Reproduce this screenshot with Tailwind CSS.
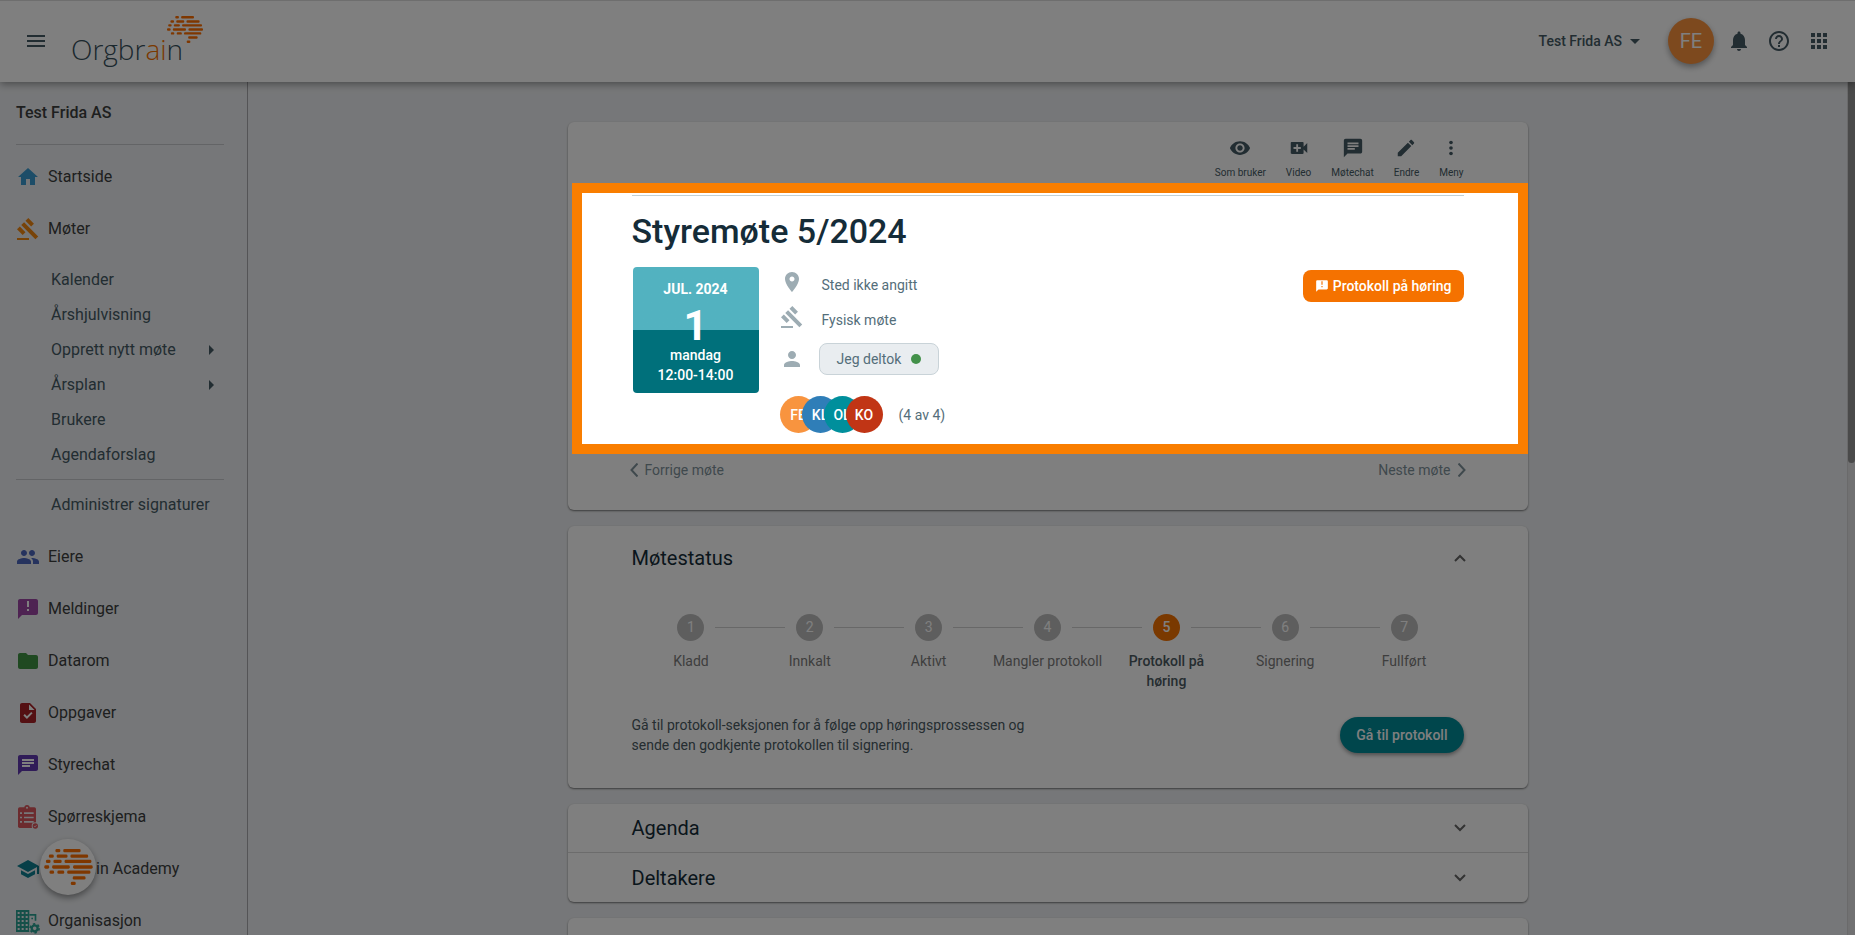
<!DOCTYPE html>
<html lang="nb">
<head>
<meta charset="utf-8">
<title>Orgbrain – Styremøte 5/2024</title>
<script src="https://cdn.jsdelivr.net/npm/@tailwindcss/browser@4"></script>
</head>
<body class="font-['Roboto',sans-serif]">
<svg class="hidden" aria-hidden="true">
  <symbol id="brain" viewBox="130 746 148 110">
    <g fill="#ff6f00">
      <rect x="164" y="746" width="15" height="10" rx="4"/><rect x="188" y="746" width="53" height="10" rx="4"/>
      <rect x="144" y="763" width="15" height="10" rx="4"/><rect x="168" y="763" width="33" height="10" rx="4"/><rect x="210" y="763" width="54" height="10" rx="4"/>
      <rect x="135" y="779" width="14" height="10" rx="4"/><rect x="158" y="779" width="25" height="10" rx="4"/><rect x="192" y="779" width="82" height="10" rx="4"/>
      <rect x="130" y="796" width="15" height="10" rx="4"/><rect x="154" y="796" width="54" height="10" rx="4"/><rect x="218" y="796" width="60" height="10" rx="4"/>
      <rect x="146" y="812" width="14" height="10" rx="4"/><rect x="170" y="812" width="21" height="10" rx="4"/><rect x="200" y="812" width="71" height="10" rx="4"/>
      <rect x="217" y="829" width="39" height="10" rx="4"/>
      <rect x="211" y="846" width="15" height="10" rx="4"/>
    </g>
  </symbol>
  <symbol id="gavel" viewBox="0 0 24 24"><path d="M1 21h12v2H1zM5.245 8.07l2.83-2.827 14.14 14.142-2.828 2.828zM12.317 1l5.657 5.656-2.83 2.83-5.654-5.66zM3.825 9.485l5.657 5.657-2.828 2.828-5.657-5.657z"/></symbol>
  <symbol id="chat" viewBox="0 0 24 24"><path d="M20 2H4c-1.1 0-1.99.9-1.99 2L2 22l4-4h14c1.1 0 2-.9 2-2V4c0-1.1-.9-2-2-2zM6 9h12v2H6V9zm8 5H6v-2h8v2zm4-6H6V6h12v2z"/></symbol>
  <symbol id="notice" viewBox="0 0 24 24"><path d="M20 2H4c-1.1 0-1.99.9-1.99 2L2 22l4-4h14c1.1 0 2-.9 2-2V4c0-1.1-.9-2-2-2zm-7 12h-2v-2h2v2zm0-4h-2V4h2v6z"/></symbol>
  <symbol id="down" viewBox="0 0 12 8"><path d="M1 1l5 5 5-5" fill="none" stroke="currentColor" stroke-width="2"/></symbol>
</svg>

<div class="flex h-screen flex-col overflow-hidden bg-[#edeff2]">
  <header class="relative z-10 flex h-[82px] shrink-0 items-center border-t border-[#dddddd] bg-white px-6 pb-px text-[#455a64] shadow-[0_2px_8px_rgba(0,0,0,0.4)]">
    <button class="flex size-6 items-center justify-center" aria-label="Meny">
      <svg class="h-3 w-[18px]" viewBox="0 0 18 12" fill="currentColor"><path d="M0 0h18v2H0zM0 5h18v2H0zM0 10h18v2H0z"/></svg>
    </button>
    <a href="#" class="relative ml-[23px] block pt-4 font-['Open_Sans'] text-[28px] font-light leading-8 text-[#37505c]" aria-label="Orgbrain">Orgbr<span class="text-[#f57200]">ai</span>n<svg class="absolute -right-5 -top-px h-[27px] w-9"><use href="#brain"/></svg></a>
    <button class="ml-auto flex items-center gap-2 text-sm font-medium">Test Frida AS
      <svg class="h-[5px] w-[10px]" viewBox="0 0 10 5" fill="currentColor"><path d="M0 0h10L5 5z"/></svg>
    </button>
    <button class="ml-7 size-[46px] rounded-full bg-[#fb923c] text-xl text-white shadow-[0_3px_6px_rgba(0,0,0,0.35)]">FE</button>
    <div class="ml-[13px] flex gap-4">
      <button aria-label="Varsler"><svg class="size-6" viewBox="0 0 24 24" fill="currentColor"><path d="M12 22c1.1 0 2-.9 2-2h-4c0 1.1.89 2 2 2zm6-6v-5c0-3.07-1.64-5.64-4.5-6.32V4c0-.83-.67-1.5-1.5-1.5s-1.5.67-1.5 1.5v.68C7.63 5.36 6 7.92 6 11v5l-2 2v1h16v-1l-2-2z"/></svg></button>
      <button aria-label="Hjelp"><svg class="size-6" viewBox="0 0 24 24" fill="currentColor"><path d="M11 18h2v-2h-2v2zm1-16C6.48 2 2 6.48 2 12s4.48 10 10 10 10-4.48 10-10S17.52 2 12 2zm0 18c-4.41 0-8-3.59-8-8s3.59-8 8-8 8 3.59 8 8-3.59 8-8 8zm0-14c-2.21 0-4 1.79-4 4h2c0-1.1.9-2 2-2s2 .9 2 2c0 2-3 1.75-3 5h2c0-2.25 3-2.5 3-5 0-2.21-1.79-4-4-4z"/></svg></button>
      <button aria-label="Apper"><svg class="size-6" viewBox="0 0 24 24" fill="currentColor"><path d="M4 8h4V4H4v4zm6 12h4v-4h-4v4zm-6 0h4v-4H4v4zm0-6h4v-4H4v4zm6 0h4v-4h-4v4zm6-10v4h4V4h-4zm-6 4h4V4h-4v4zm6 6h4v-4h-4v4zm0 6h4v-4h-4v4z"/></svg></button>
    </div>
  </header>

  <div class="flex min-h-0 flex-1">
    <nav class="w-[248px] shrink-0 border-r border-[#a8a8ac] text-[#3c3e3e]">
      <div class="mb-1.5 ml-4 flex h-[63px] w-[208px] items-center border-b border-[#c6c9cc] text-base font-medium">Test Frida AS</div>
      <ul>
        <li><a href="#" class="flex h-[52px] items-center gap-2 px-4"><svg class="size-6" viewBox="0 0 24 24" fill="#3b9bd1"><path d="M10 20v-6h4v6h5v-8h3L12 3 2 12h3v8z"/></svg>Startside</a></li>
        <li><a href="#" class="flex h-[52px] items-center gap-2 px-4"><svg class="size-6" fill="#f18711"><use href="#gavel"/></svg>Møter</a>
          <ul class="pb-[9px] pt-[7px] text-[#455a64]">
            <li><a href="#" class="flex h-[35px] items-center pl-[51px]">Kalender</a></li>
            <li><a href="#" class="flex h-[35px] items-center pl-[51px]">Årshjulvisning</a></li>
            <li><a href="#" class="flex h-[35px] items-center justify-between pl-[51px] pr-[33px]">Opprett nytt møte<svg class="h-[10px] w-[5px]" viewBox="0 0 5 10" fill="currentColor"><path d="M0 0l5 5-5 5z"/></svg></a></li>
            <li><a href="#" class="flex h-[35px] items-center justify-between pl-[51px] pr-[33px]">Årsplan<svg class="h-[10px] w-[5px]" viewBox="0 0 5 10" fill="currentColor"><path d="M0 0l5 5-5 5z"/></svg></a></li>
            <li><a href="#" class="flex h-[35px] items-center pl-[51px]">Brukere</a></li>
            <li><a href="#" class="flex h-[35px] items-center pl-[51px]">Agendaforslag</a></li>
            <li class="mx-4 my-[7px] h-px w-[208px] bg-[#c6c9cc]"></li>
            <li><a href="#" class="flex h-[35px] items-center pl-[51px]">Administrer signaturer</a></li>
          </ul>
        </li>
        <li><a href="#" class="flex h-[52px] items-center gap-2 px-4"><svg class="size-6" viewBox="0 0 24 24" fill="#4c67bd"><path d="M16 11c1.66 0 2.99-1.34 2.99-3S17.66 5 16 5c-1.66 0-3 1.34-3 3s1.34 3 3 3zm-8 0c1.66 0 2.99-1.34 2.99-3S9.66 5 8 5C6.34 5 5 6.34 5 8s1.34 3 3 3zm0 2c-2.33 0-7 1.17-7 3.5V19h14v-2.5c0-2.33-4.67-3.5-7-3.5zm8 0c-.29 0-.62.02-.97.05 1.16.84 1.97 1.97 1.97 3.45V19h6v-2.5c0-2.33-4.67-3.5-7-3.5z"/></svg>Eiere</a></li>
        <li><a href="#" class="flex h-[52px] items-center gap-2 px-4"><svg class="size-6" fill="#9c46a5"><rect x="9" y="4" width="6" height="11" fill="#fff"/><use href="#notice"/></svg>Meldinger</a></li>
        <li><a href="#" class="flex h-[52px] items-center gap-2 px-4"><svg class="size-6" viewBox="0 0 24 24" fill="#3f9243"><path d="M10 4H4c-1.1 0-1.99.9-1.99 2L2 18c0 1.1.9 2 2 2h16c1.1 0 2-.9 2-2V8c0-1.1-.9-2-2-2h-8l-2-2z"/></svg>Datarom</a></li>
        <li><a href="#" class="flex h-[52px] items-center gap-2 px-4"><svg class="size-6" viewBox="0 0 24 24" fill="#a82126"><path fill="#fff" d="M7 10h11v8H7zM13 3l6 6h-6z"/><path d="M14 2H6c-1.1 0-1.99.9-1.99 2L4 20c0 1.1.89 2 1.99 2H18c1.1 0 2-.9 2-2V8l-6-6zm-3.06 16L7.4 14.46l1.41-1.41 2.12 2.12 4.24-4.24 1.41 1.41L10.94 18zM13 9V3.5L18.5 9H13z"/></svg>Oppgaver</a></li>
        <li><a href="#" class="flex h-[52px] items-center gap-2 px-4"><svg class="size-6" fill="#6039b1"><rect x="5" y="5" width="14" height="10" fill="#fff"/><use href="#chat"/></svg>Styrechat</a></li>
        <li><a href="#" class="flex h-[52px] items-center gap-2 px-4"><svg class="size-6" viewBox="48 615 72 72" fill="#d9575c"><rect x="54" y="622" width="54" height="62" rx="5"/><circle cx="81" cy="623" r="8"/><circle cx="81" cy="623" r="3" fill="#edeff2"/><path d="M60 637h6v5h-6zM60 650h6v5h-6zM60 663h6v5h-6zM72 637h29v5H72zM72 650h29v5H72zM72 663h29v5H72z" fill="#edeff2"/><circle cx="106" cy="678" r="11" fill="#edeff2"/><circle cx="106" cy="678" r="8"/><path d="M102 678l3 3 5-6" fill="none" stroke="#edeff2" stroke-width="2"/></svg>Spørreskjema</a></li>
        <li><a href="#" class="flex h-[52px] items-center gap-2 px-4"><svg class="size-6" viewBox="0 0 24 24" fill="#0f7f91"><path d="M5 13.18v4L12 21l7-3.82v-4L12 17l-7-3.82zM12 3L1 9l11 6 9-4.91V17h2V9L12 3z"/></svg>Orgbrain Academy</a></li>
        <li><a href="#" class="flex h-[52px] items-center gap-2 px-4"><svg class="size-6 overflow-visible" viewBox="48 924 72 72" fill="#2ba193"><path d="M48 927h40v66H48z"/><path d="M53 933h6v6h-6zM65 933h6v6h-6zM77 933h6v6h-6zM53 945h6v6h-6zM65 945h6v6h-6zM77 945h6v6h-6zM53 957h6v6h-6zM65 957h6v6h-6zM77 957h6v6h-6zM53 969h6v6h-6zM65 969h6v6h-6zM77 969h6v6h-6zM53 981h6v6h-6zM65 981h6v6h-6zM77 981h6v6h-6z" fill="#edeff2"/><path d="M88 939h21v20h-5v-15H88zM94 950h5v5h-5z"/><circle cx="104" cy="982" r="17" fill="#edeff2"/><circle cx="104" cy="982" r="9" fill="none" stroke="#2ba193" stroke-width="7"/><circle cx="104" cy="982" r="13.5" fill="none" stroke="#2ba193" stroke-width="5" stroke-dasharray="7 7.14"/></svg>Organisasjon</a></li>
      </ul>
    </nav>

    <main class="flex flex-1 justify-center pt-10">
      <div class="flex w-[960px] flex-col gap-4">
        <section class="relative shrink-0 rounded-md bg-white px-16 pb-7 pt-[15px] shadow-[0_1px_2px_rgba(0,0,0,0.5)]">
          <div class="flex justify-end gap-5 text-[10px] leading-3 text-[#455a64]">
            <button class="flex flex-col items-center gap-2"><svg class="size-[22px]" viewBox="0 0 24 24" fill="currentColor"><path d="M12 4.5C7 4.5 2.73 7.61 1 12c1.73 4.39 6 7.5 11 7.5s9.27-3.11 11-7.5c-1.73-4.39-6-7.5-11-7.5zM12 17c-2.76 0-5-2.24-5-5s2.24-5 5-5 5 2.24 5 5-2.24 5-5 5zm0-8c-1.66 0-3 1.34-3 3s1.34 3 3 3 3-1.34 3-3-1.34-3-3-3z"/></svg>Som bruker</button>
            <button class="flex flex-col items-center gap-2"><svg class="size-[22px]" viewBox="0 0 24 24" fill="currentColor"><path d="M17 10.5V6.500c0-.55-.45-1-1-1H4c-.55 0-1 .45-1 1v11c0 .55.45 1 1 1h12c.55 0 1-.45 1-1v-4l4 4v-11l-4 4zM14 13h-3v3H9v-3H6v-2h3V8h2v3h3v2z"/></svg>Video</button>
            <button class="flex flex-col items-center gap-2"><svg class="size-[22px]" fill="currentColor"><use href="#chat"/></svg>Møtechat</button>
            <button class="flex flex-col items-center gap-2"><svg class="size-[22px]" viewBox="0 0 24 24" fill="currentColor"><path d="M3 17.25V21h3.750L17.810 9.940l-3.750-3.750L3 17.250zM20.710 7.040c.39-.39.39-1.020 0-1.410l-2.340-2.340c-.39-.39-1.020-.39-1.410 0l-1.830 1.830 3.750 3.750 1.830-1.830z"/></svg>Endre</button>
            <button class="flex flex-col items-center gap-2"><svg class="size-[22px]" viewBox="0 0 24 24" fill="currentColor"><circle cx="12" cy="6" r="2"/><circle cx="12" cy="12" r="2"/><circle cx="12" cy="18" r="2"/></svg>Meny</button>
          </div>
          <div class="mt-4 border-t border-[#c3d0d3] pt-[15px]">
            <h1 class="text-[34px] font-medium leading-10 text-[#152c38]">Styremøte 5/2024</h1>
            <div class="mt-4 flex text-sm text-[#546e7a]">
              <div class="ml-px flex size-[126px] flex-col items-center rounded bg-linear-to-b from-[#52b2c0] from-50% to-[#00707b] to-50% pt-3 font-medium leading-5 text-white">
                <span class="font-bold">JUL. 2024</span>
                <span class="pt-2 text-[42px] font-bold leading-[38px]">1</span>
                <span>mandag</span>
                <span>12:00-14:00</span>
              </div>
              <div class="ml-[21px]">
                <div class="flex h-[35px] items-center gap-[18px]"><svg class="mb-1.5 size-6 fill-[#9dacb3]" viewBox="0 0 24 24"><path d="M12 2C8.130 2 5 5.130 5 9c0 5.250 7 13 7 13s7-7.750 7-13c0-3.870-3.130-7-7-7zm0 9.500c-1.380 0-2.500-1.120-2.500-2.500s1.120-2.500 2.500-2.500 2.500 1.120 2.500 2.500-1.120 2.500-2.500 2.500z"/></svg>Sted ikke angitt</div>
                <div class="flex h-[35px] items-center gap-[18px]"><svg class="mb-1.5 size-6 fill-[#9dacb3]"><use href="#gavel"/></svg>Fysisk møte</div>
                <div class="flex h-11 items-center gap-[15px]"><svg class="size-6 fill-[#9dacb3]" viewBox="0 0 24 24"><path d="M12 12c2.210 0 4-1.790 4-4s-1.790-4-4-4-4 1.790-4 4 1.790 4 4 4zm0 2c-2.670 0-8 1.340-8 4v2h16v-2c0-2.660-5.330-4-8-4z"/></svg>
                  <button class="flex h-8 items-center gap-[10px] rounded-lg border border-[#c9d3d8] bg-[#e9edf0] px-[17px]">Jeg deltok<span class="size-[10px] rounded-full bg-[#43914a]"></span></button></div>
                <div class="mt-[15px] flex items-center">
                  <div class="flex -space-x-[15px] font-medium text-white">
                    <span class="flex size-[37px] items-center justify-center rounded-full bg-[#f8943f]">FE</span>
                    <span class="flex size-[37px] items-center justify-center rounded-full bg-[#2f7eb8]">KL</span>
                    <span class="flex size-[37px] items-center justify-center rounded-full bg-[#008f9c]">OL</span>
                    <span class="flex size-[37px] items-center justify-center rounded-full bg-[#c13515]">KO</span>
                  </div>
                  <span class="ml-4">(4 av 4)</span>
                </div>
              </div>
              <div class="ml-auto mt-[3px] flex h-8 items-center gap-1 self-start rounded-lg bg-[#f57200] px-3 font-medium text-white"><svg class="size-[14px]" fill="currentColor"><use href="#notice"/></svg>Protokoll på høring</div>
            </div>
          </div>
          <div class="mt-[25px] flex h-6 items-center justify-between text-sm text-[#7f929b]">
            <a href="#" class="-ml-0.5 flex items-center gap-[7px]"><svg class="h-[14px] w-2" viewBox="0 0 8 14" fill="none" stroke="currentColor" stroke-width="2"><path d="M7.500.5L1.500 7l6 6.500"/></svg>Forrige møte</a>
            <a href="#" class="-mr-0.5 flex items-center gap-[7px]">Neste møte<svg class="h-[14px] w-2" viewBox="0 0 8 14" fill="none" stroke="currentColor" stroke-width="2"><path d="M.500.5L6.500 7l-6 6.500"/></svg></a>
          </div>
          <!-- Tour spotlight: frames the meeting summary and dims the rest of the page -->
          <div class="pointer-events-none absolute bottom-14 left-1 right-0 top-[61px] z-50 border-[10px] border-[#f97e00] shadow-[0_0_0_4000px_rgba(0,0,0,0.5)]"></div>
        </section>

        <section class="shrink-0 rounded-md bg-white px-16 pb-[33px] pt-5 shadow-[0_1px_2px_rgba(0,0,0,0.5)]">
          <div class="flex items-center justify-between">
            <h2 class="text-xl leading-6 text-[#152c38]">Møtestatus</h2>
            <button class="-mr-0.5 text-[#666]" aria-label="Skjul møtestatus"><svg class="h-2 w-3 rotate-180"><use href="#down"/></svg></button>
          </div>
          <ol class="mt-11 flex text-center text-sm leading-5 text-[#7c7c7c]">
            <li class="flex-1"><div class="mb-[10px] flex items-center"><i class="mr-[11px] h-px flex-1"></i><span class="size-[27px] rounded-full bg-[#bdbdbd] leading-[27px] text-white">1</span><i class="ml-[11px] h-px flex-1 bg-[#d0d0d0]"></i></div>Kladd</li>
            <li class="flex-1"><div class="mb-[10px] flex items-center"><i class="mr-[11px] h-px flex-1 bg-[#d0d0d0]"></i><span class="size-[27px] rounded-full bg-[#bdbdbd] leading-[27px] text-white">2</span><i class="ml-[11px] h-px flex-1 bg-[#d0d0d0]"></i></div>Innkalt</li>
            <li class="flex-1"><div class="mb-[10px] flex items-center"><i class="mr-[11px] h-px flex-1 bg-[#d0d0d0]"></i><span class="size-[27px] rounded-full bg-[#bdbdbd] leading-[27px] text-white">3</span><i class="ml-[11px] h-px flex-1 bg-[#d0d0d0]"></i></div>Aktivt</li>
            <li class="flex-1"><div class="mb-[10px] flex items-center"><i class="mr-[11px] h-px flex-1 bg-[#d0d0d0]"></i><span class="size-[27px] rounded-full bg-[#bdbdbd] leading-[27px] text-white">4</span><i class="ml-[11px] h-px flex-1 bg-[#d0d0d0]"></i></div>Mangler protokoll</li>
            <li class="flex-1 font-medium text-[#4c5a62]" aria-current="step"><div class="mb-[10px] flex items-center"><i class="mr-[11px] h-px flex-1 bg-[#d0d0d0]"></i><span class="size-[27px] rounded-full bg-[#f57200] leading-[27px] text-white">5</span><i class="ml-[11px] h-px flex-1 bg-[#d0d0d0]"></i></div>Protokoll på<br>høring</li>
            <li class="flex-1"><div class="mb-[10px] flex items-center"><i class="mr-[11px] h-px flex-1 bg-[#d0d0d0]"></i><span class="size-[27px] rounded-full bg-[#bdbdbd] leading-[27px] text-white">6</span><i class="ml-[11px] h-px flex-1 bg-[#d0d0d0]"></i></div>Signering</li>
            <li class="flex-1"><div class="mb-[10px] flex items-center"><i class="mr-[11px] h-px flex-1 bg-[#d0d0d0]"></i><span class="size-[27px] rounded-full bg-[#bdbdbd] leading-[27px] text-white">7</span><i class="ml-[11px] h-px flex-1"></i></div>Fullført</li>
          </ol>
          <div class="mt-6 flex items-center justify-between text-sm leading-5">
            <p class="text-[#4a5a62]">Gå til protokoll-seksjonen for å følge opp høringsprossessen og<br>sende den godkjente protokollen til signering.</p>
            <button class="h-9 rounded-full bg-[#008c99] px-4 font-medium text-white shadow-[0_2px_4px_rgba(0,0,0,0.4)]">Gå til protokoll</button>
          </div>
        </section>

        <section class="shrink-0 rounded-md bg-white text-xl leading-6 text-[#152c38] shadow-[0_1px_2px_rgba(0,0,0,0.5)]">
          <div class="flex h-[49px] items-center justify-between border-b border-[#d8d8d8] px-16"><h2>Agenda</h2><button class="-mr-0.5 text-[#666]" aria-label="Vis agenda"><svg class="h-2 w-3"><use href="#down"/></svg></button></div>
          <div class="flex h-[49px] items-center justify-between px-16"><h2>Deltakere</h2><button class="-mr-0.5 text-[#666]" aria-label="Vis deltakere"><svg class="h-2 w-3"><use href="#down"/></svg></button></div>
        </section>

        <section class="h-16 shrink-0 rounded-md bg-white shadow-[0_1px_2px_rgba(0,0,0,0.5)]"></section>
      </div>
    </main>
    <div class="w-2 shrink-0 border-l border-[#d4d4d6] bg-[#e2e3e5]"><div class="h-[381px] rounded-b-full bg-[#949494]"></div></div>
  </div>

  <button class="fixed bottom-10 left-10 flex size-14 items-center justify-center rounded-full bg-white shadow-[0_3px_6px_rgba(0,0,0,0.4)]" aria-label="Orgbrain-hjelp"><svg class="h-9 w-[49px]"><use href="#brain"/></svg></button>
</div>
</body>
</html>
